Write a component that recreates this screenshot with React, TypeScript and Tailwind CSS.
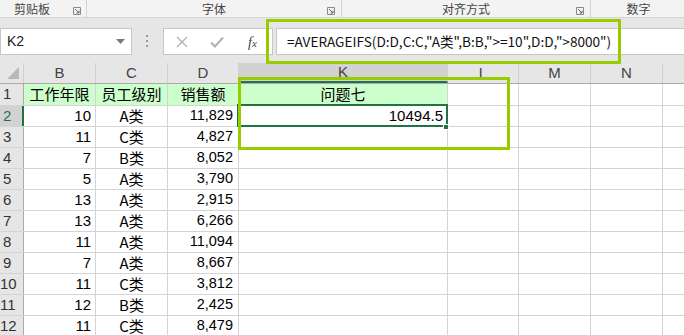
import React from "react";

const rows: [string, string, string][] = [
  ["10", "A类", "11,829"],
  ["11", "C类", "4,827"],
  ["7", "B类", "8,052"],
  ["5", "A类", "3,790"],
  ["13", "A类", "2,915"],
  ["13", "A类", "6,266"],
  ["11", "A类", "11,094"],
  ["7", "A类", "8,667"],
  ["11", "C类", "3,812"],
  ["12", "B类", "2,425"],
  ["11", "C类", "8,479"],
];

const font = { fontFamily: '"Noto Sans CJK SC", "Noto Sans", sans-serif' };
const numFont = { fontFamily: '"Liberation Sans", "Noto Sans CJK SC", sans-serif' };

function Launcher() {
  return (
    <svg width="8" height="8" viewBox="0 0 8 8" className="shrink-0">
      <path d="M0.5 0.5 H7.5 V7.5 H0.5 Z" fill="none" stroke="#8a8a8a" strokeWidth="1" />
      <path d="M2 2 L6 6 M6 3.5 V6 H3.5" fill="none" stroke="#6a6a6a" strokeWidth="1" />
    </svg>
  );
}

function Group({ w, label, launcher = true }: { w: number; label: string; launcher?: boolean }) {
  return (
    <div className="relative h-full flex items-start justify-center border-r border-[#d4d4d4]" style={{ width: w }}>
      <span className="text-[12px] text-[#444] leading-[17px]">{label}</span>
      {launcher && (
        <div className="absolute right-[6px] top-[7px]">
          <Launcher />
        </div>
      )}
    </div>
  );
}

export default function App() {
  const cols = [
    { w: 72, label: "B" },
    { w: 72, label: "C" },
    { w: 71, label: "D" },
    { w: 209, label: "K" },
    { w: 71, label: "L" },
    { w: 72, label: "M" },
    { w: 72, label: "N" },
    { w: 60, label: "" },
  ];
  return (
    <div className="relative w-[684px] h-[335px] overflow-hidden bg-white" style={font}>
      {/* ribbon group labels */}
      <div className="flex h-[18px] bg-[#f3f3f3] border-b border-[#d6d6d6]">
        <div className="relative h-full flex items-start border-r border-[#d4d4d4] w-[87px]">
          <span className="text-[12px] text-[#444] leading-[17px] ml-[14px]">剪贴板</span>
          <div className="absolute right-[5px] top-[7px]">
            <Launcher />
          </div>
        </div>
        <Group w={255} label="字体" />
        <Group w={249} label="对齐方式" />
        <div className="flex-1 h-full flex items-start justify-center">
          <span className="text-[12px] text-[#444] leading-[17px] ml-[2px]">数字</span>
        </div>
      </div>

      {/* formula bar */}
      <div className="relative h-[45px] bg-[#e6e6e6]">
        <div className="absolute left-0 top-[10px] w-[132px] h-[27px] bg-white border border-[#c6c6c6] flex items-center">
          <span className="ml-[6px] text-[14px] text-[#222]" style={numFont}>K2</span>
          <svg className="absolute right-[6px] top-[10px]" width="9" height="5" viewBox="0 0 9 5">
            <path d="M0 0 H9 L4.5 5 Z" fill="#7a7a7a" />
          </svg>
        </div>
        <div className="absolute left-[146px] top-[17px] flex flex-col gap-[3px]">
          <div className="w-[2px] h-[2px] bg-[#9a9a9a]" />
          <div className="w-[2px] h-[2px] bg-[#9a9a9a]" />
          <div className="w-[2px] h-[2px] bg-[#9a9a9a]" />
        </div>
        <div className="absolute left-[163px] top-[10px] w-[110px] h-[27px] bg-white border border-[#c6c6c6] flex items-center">
          <svg className="absolute left-[12px] top-[7px]" width="12" height="12" viewBox="0 0 12 12">
            <path d="M1 1 L11 11 M11 1 L1 11" stroke="#b0b0b0" strokeWidth="1.3" />
          </svg>
          <svg className="absolute left-[46px] top-[7px]" width="14" height="12" viewBox="0 0 14 12">
            <path d="M1 6.5 L5 10.5 L13 1.5" fill="none" stroke="#b0b0b0" strokeWidth="2" />
          </svg>
          <span
            className="absolute left-[84px] top-[3px] text-[14px] italic text-[#444]"
            style={{ fontFamily: '"Liberation Serif", serif' }}
          >
            f<span className="text-[11px]">x</span>
          </span>
        </div>
        <div className="absolute left-[276px] top-[10px] w-[420px] h-[27px] bg-white border border-[#c6c6c6] flex items-center">
          <span className="ml-[10px] text-[13.6px] text-[#111] whitespace-nowrap">
            =AVERAGEIFS(D:D,C:C,"A类",B:B,"&gt;=10",D:D,"&gt;8000")
          </span>
        </div>
      </div>

      {/* column header row */}
      <div className="flex h-[21px] bg-[#e6e6e6] border-b border-[#ababab]">
        <div className="relative w-[24px] shrink-0 h-full border-r border-[#d0d0d0]">
          <svg className="absolute left-[7px] top-[4px]" width="12" height="12" viewBox="0 0 12 12">
            <path d="M12 0 V12 H0 Z" fill="#b9b9b9" />
          </svg>
        </div>
        {cols.map((c) => (
          <div
            key={c.label + c.w}
            className={`shrink-0 h-full border-r border-[#d0d0d0] flex items-center justify-center text-[15px] text-[#444] ${
              c.label === "K" ? "bg-[#d2d2d2] border-b-2 border-b-[#217346]" : ""
            }`}
            style={{ width: c.w, ...numFont }}
          >
            {c.label}
          </div>
        ))}
      </div>

      {/* row 1 */}
      <div className="flex h-[22px] border-b border-[#d4d4d4]">
        <div className="w-[24px] shrink-0 bg-[#e6e6e6] border-r border-[#ababab] flex items-center pl-[3px] text-[15px] text-[#333]" style={numFont}>
          1
        </div>
        {["工作年限", "员工级别", "销售额"].map((t, i) => (
          <div
            key={t}
            className="shrink-0 bg-[#ccffcc] border-r border-[#d4d4d4] flex items-center justify-center text-[15px] text-black"
            style={{ width: cols[i].w }}
          >
            {t}
          </div>
        ))}
        <div className="shrink-0 bg-[#ccffcc] border-r border-[#d4d4d4] flex items-center justify-center text-[15px] text-black w-[209px]">
          问题七
        </div>
        {[71, 72, 72, 60].map((w, i) => (
          <div key={i} className="shrink-0 border-r border-[#d4d4d4]" style={{ width: w }} />
        ))}
      </div>

      {rows.map((r, idx) => {
        const n = idx + 2;
        const sel = n === 2;
        return (
          <div key={n} className="flex h-[21px] border-b border-[#d4d4d4]">
            <div
              className={`w-[24px] shrink-0 flex items-center text-[15px] ${
                n >= 10 ? "pl-0" : "pl-[3px]"
              } ${sel ? "bg-[#d2d2d2] text-[#217346] border-r-2 border-[#217346]" : "bg-[#e6e6e6] text-[#333] border-r border-[#ababab]"}`}
              style={numFont}
            >
              {n}
            </div>
            <div className="w-[72px] shrink-0 border-r border-[#d4d4d4] flex items-center justify-end pr-[4px] text-[15px] text-black" style={numFont}>
              {r[0]}
            </div>
            <div className="w-[72px] shrink-0 border-r border-[#d4d4d4] flex items-center justify-center text-[15px] text-black">
              {r[1]}
            </div>
            <div className="w-[71px] shrink-0 border-r border-[#d4d4d4] flex items-center justify-end pr-[5px] text-[14.5px] text-black" style={numFont}>
              {r[2]}
            </div>
            <div className="w-[209px] shrink-0 border-r border-[#d4d4d4] flex items-center justify-end pr-[4px] text-[15px] text-black" style={numFont}>
              {sel ? "10494.5" : ""}
            </div>
            {[71, 72, 72, 60].map((w, i) => (
              <div key={i} className="shrink-0 border-r border-[#d4d4d4]" style={{ width: w }} />
            ))}
          </div>
        );
      })}

      {/* selection K2 */}
      <div className="absolute left-[237px] top-[104px] w-[211px] h-[23px] border-2 border-[#217346] pointer-events-none" />
      <div className="absolute left-[443px] top-[124px] w-[6px] h-[6px] bg-[#217346] border border-white" />

      {/* lime highlight boxes */}
      <div className="absolute left-[266px] top-[19px] w-[355px] h-[45px] border-[3px] border-[#99cc00] pointer-events-none" />
      <div className="absolute left-[238px] top-[77px] w-[272px] h-[73px] border-[3px] border-[#99cc00] pointer-events-none" />
    </div>
  );
}
